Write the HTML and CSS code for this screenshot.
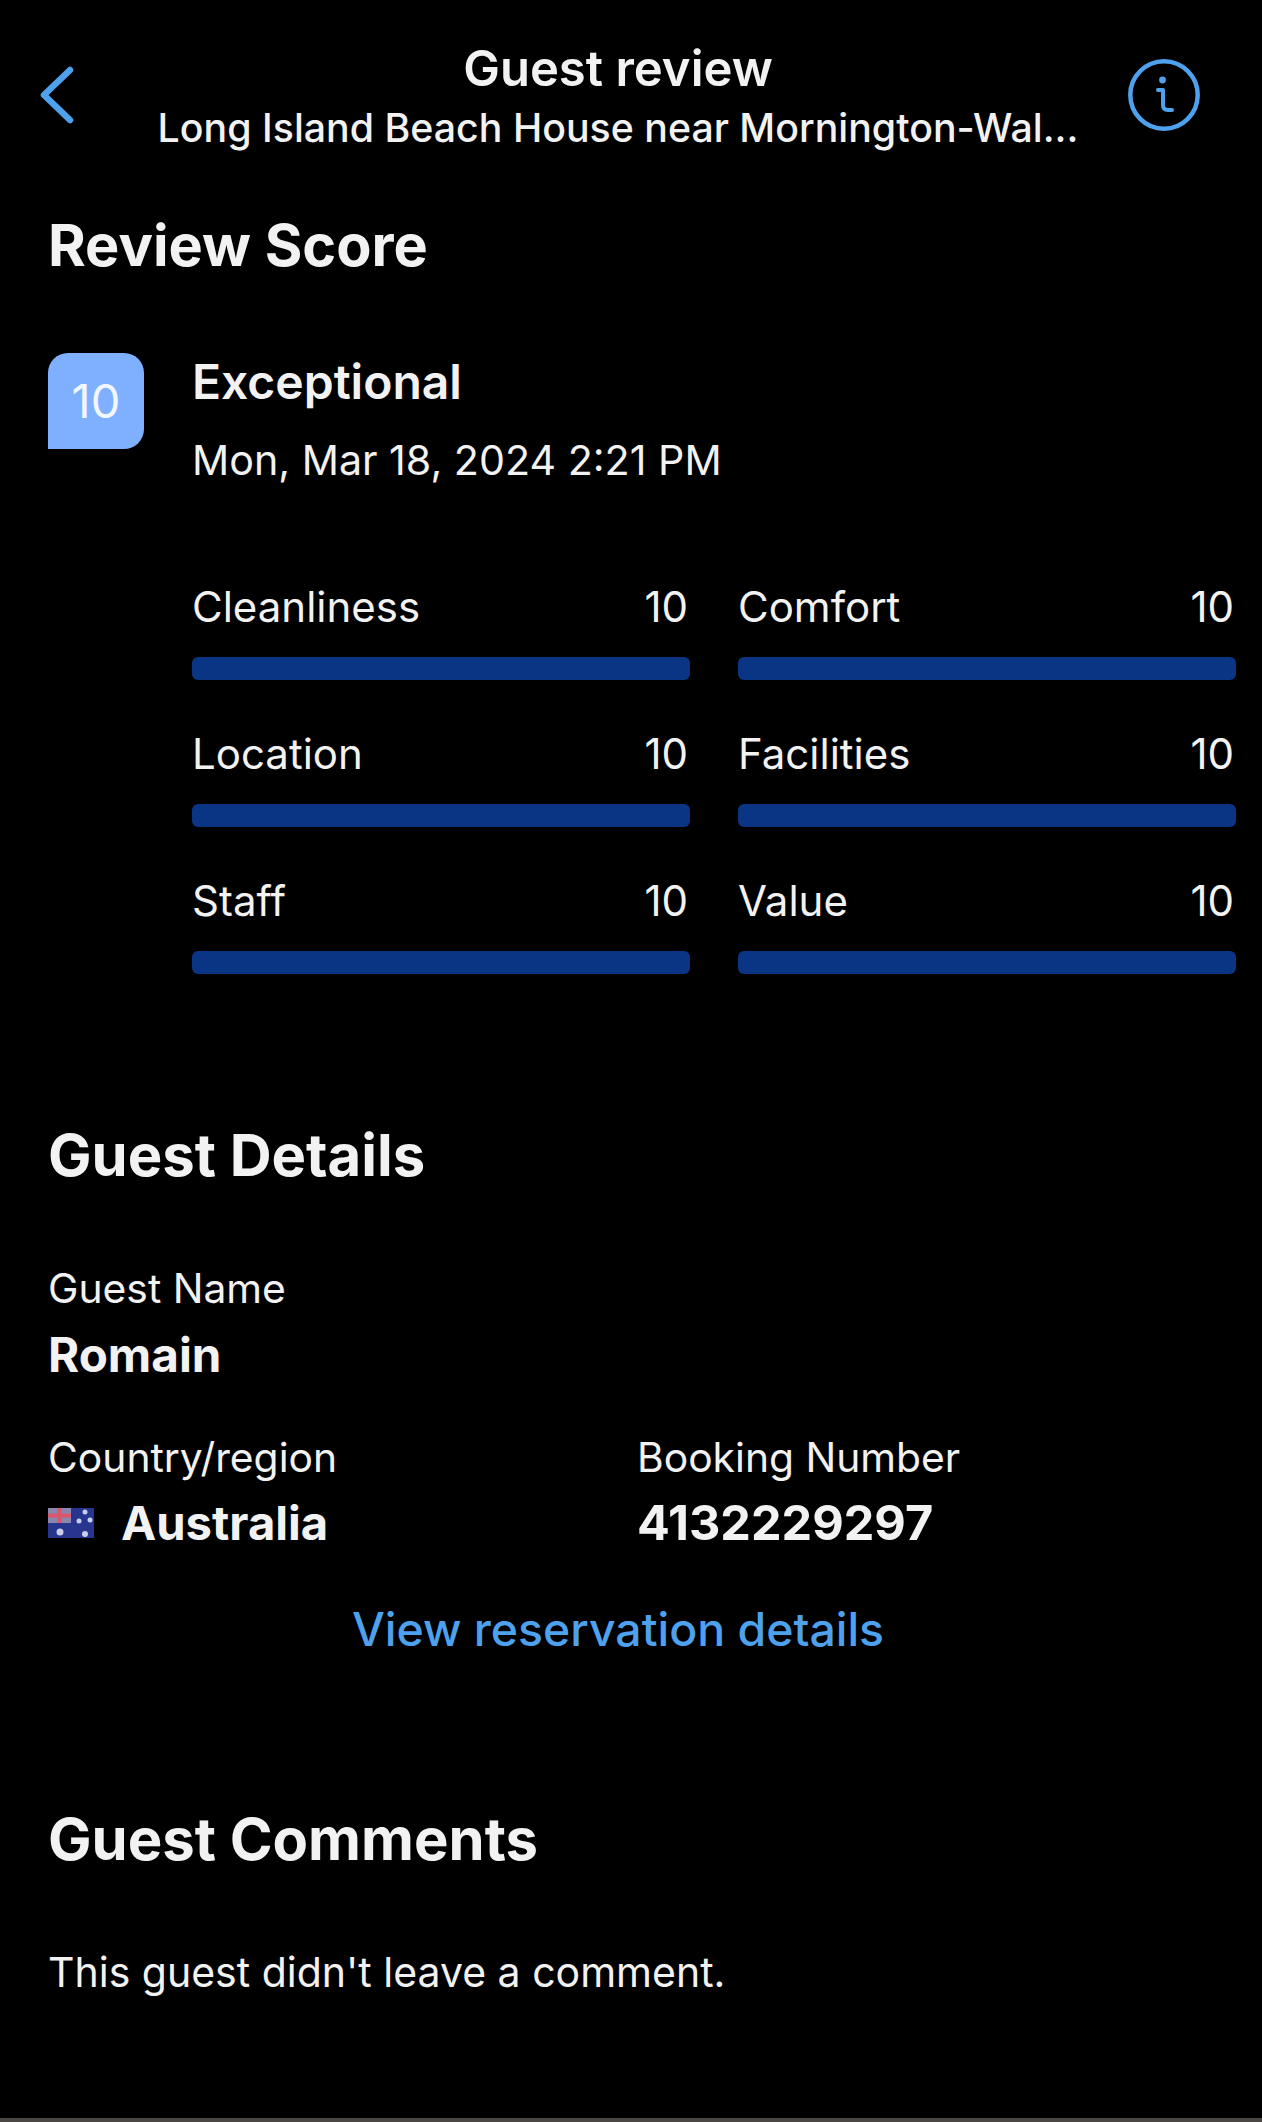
FILE: index.html
```html
<!DOCTYPE html>
<html lang="en">
<head>
	<meta charset="UTF-8">
	<title>Guest review</title>
	<link rel="stylesheet" href="styles.css">
</head>
<body>
	<div class="page">
		<div class="topbar">
			<a class="back" href="javascript:;">
				<svg width="34" height="58" viewBox="0 0 34 58"><path d="M30 4 L4 29 L30 54" fill="none" stroke="#4ea1ec" stroke-width="6.5" stroke-linecap="round" stroke-linejoin="round"/></svg>
			</a>
			<div class="titles">
				<div class="title">Guest review</div>
				<div class="subtitle">Long Island Beach House near Mornington-Wal...</div>
			</div>
			<a class="info" href="javascript:;">
				<svg width="72" height="72" viewBox="0 0 72 72"><circle cx="36" cy="36" r="33.7" fill="none" stroke="#4ea1ec" stroke-width="4.5"/><circle cx="34.5" cy="21" r="3.4" fill="#4ea1ec"/><path d="M30 31 H35 V46 Q35 51 40 51 H44" fill="none" stroke="#4ea1ec" stroke-width="4" stroke-linecap="round" stroke-linejoin="round"/></svg>
			</a>
		</div>

		<h2 class="heading heading-score">Review Score</h2>

		<div class="score">
			<div class="badge">10</div>
			<div class="score-main">
				<div class="score-word">Exceptional</div>
				<div class="score-date">Mon, Mar 18, 2024 2:21 PM</div>
				<div class="bars">
					<div class="bar-item"><div class="bar-label"><span>Cleanliness</span><span>10</span></div><div class="bar"></div></div>
					<div class="bar-item"><div class="bar-label"><span>Comfort</span><span>10</span></div><div class="bar"></div></div>
					<div class="bar-item"><div class="bar-label"><span>Location</span><span>10</span></div><div class="bar"></div></div>
					<div class="bar-item"><div class="bar-label"><span>Facilities</span><span>10</span></div><div class="bar"></div></div>
					<div class="bar-item"><div class="bar-label"><span>Staff</span><span>10</span></div><div class="bar"></div></div>
					<div class="bar-item"><div class="bar-label"><span>Value</span><span>10</span></div><div class="bar"></div></div>
				</div>
			</div>
		</div>

		<h2 class="heading heading-details">Guest Details</h2>

		<div class="field">
			<div class="field-label">Guest Name</div>
			<div class="field-value">Romain</div>
		</div>
		<div class="field-row">
			<div class="field">
				<div class="field-label">Country/region</div>
				<div class="field-value country">
					<svg class="flag" width="46" height="30" viewBox="0 0 46 30">
						<rect width="46" height="30" fill="#27358f"/>
						<rect width="23" height="15" fill="#8a86ad"/>
						<path d="M0 7.5 H23 M11.5 0 V15" stroke="#d9566c" stroke-width="4"/>
						<circle cx="12" cy="24" r="3.5" fill="#c9cfe8"/>
						<circle cx="37" cy="4" r="2.5" fill="#c9cfe8"/>
						<circle cx="31" cy="13" r="2.5" fill="#c9cfe8"/>
						<circle cx="42" cy="12" r="2.5" fill="#c9cfe8"/>
						<circle cx="37" cy="26" r="3" fill="#c9cfe8"/>
					</svg>
					<span>Australia</span>
				</div>
			</div>
			<div class="field">
				<div class="field-label">Booking Number</div>
				<div class="field-value booking">4132229297</div>
			</div>
		</div>
		<a class="link" href="javascript:;">View reservation details</a>

		<h2 class="heading heading-comments">Guest Comments</h2>
		<p class="comment">This guest didn't leave a comment.</p>
	</div>
	<div class="bottom-line"></div>
</body>
</html>
```

FILE: styles.css
```css
*{padding: 0;margin: 0;box-sizing: border-box;}
html,body{background: #000;}
body{font-family: Inter, "Liberation Sans", sans-serif;color: #f2f2f2;display: flex;flex-direction: column;height: 2122px;overflow: hidden;}
a{text-decoration: none;}
.page{flex: 1;padding: 0 26px 0 48px;}

.topbar{display: flex;align-items: center;padding-top: 39px;margin: 0 36px 0 -8px;}
.back{width: 34px;height: 58px;margin-top: -2px;}
.titles{flex: 1;text-align: center;padding-left: 34px;}
.title{font-size: 49px;line-height: 60px;font-weight: 600;}
.subtitle{font-size: 39.3px;line-height: 50px;margin-top: 4px;font-weight: 500;white-space: nowrap;}
.info{width: 72px;height: 72px;margin-top: -2px;}

.heading{font-size: 58px;line-height: 70px;font-weight: 700;}
.heading-score{margin-top: 57px;font-size: 57.6px;}
.heading-details{margin-top: 146px;}
.heading-comments{margin-top: 145px;}

.score{display: flex;margin-top: 73px;}
.badge{width: 96px;height: 96px;background: #7fb0ff;border-radius: 20px 20px 20px 0;color: #f2f6ff;font-size: 47px;line-height: 96px;text-align: center;flex-shrink: 0;}
.score-main{flex: 1;margin-left: 48px;}
.score-word{font-size: 48px;line-height: 50px;font-weight: 600;margin-top: 4px;}
.score-date{font-size: 41.2px;line-height: 50px;margin-top: 28px;}

.bars{display: grid;grid-template-columns: 498px 498px;column-gap: 48px;row-gap: 49px;margin-top: 97px;}
.bar-label{display: flex;justify-content: space-between;font-size: 42px;line-height: 50px;padding-right: 2px;}
.bar{height: 23px;margin-top: 25px;background: #0a3584;border-radius: 6px;}

.field-label{font-size: 40.8px;line-height: 50px;}
.field-value{font-size: 47.6px;line-height: 60px;font-weight: 700;margin-top: 12px;}
.booking{font-size: 48.6px;}
.heading-details + .field{margin-top: 73px;}
.field-row{display: grid;grid-template-columns: 589px 1fr;margin-top: 47px;}
.field-row .field-value{margin-top: 11px;}
.country{display: flex;align-items: center;gap: 27px;font-size: 47.2px;}
.flag{display: block;filter: blur(0.6px);}
.link{display: block;color: #4ea1ec;font-size: 46.4px;line-height: 60px;font-weight: 500;text-align: center;margin-top: 46px;padding-right: 48px;}

.comment{font-size: 41px;line-height: 50px;margin-top: 73px;}

.bottom-line{height: 4px;background: #4a4744;}
```
